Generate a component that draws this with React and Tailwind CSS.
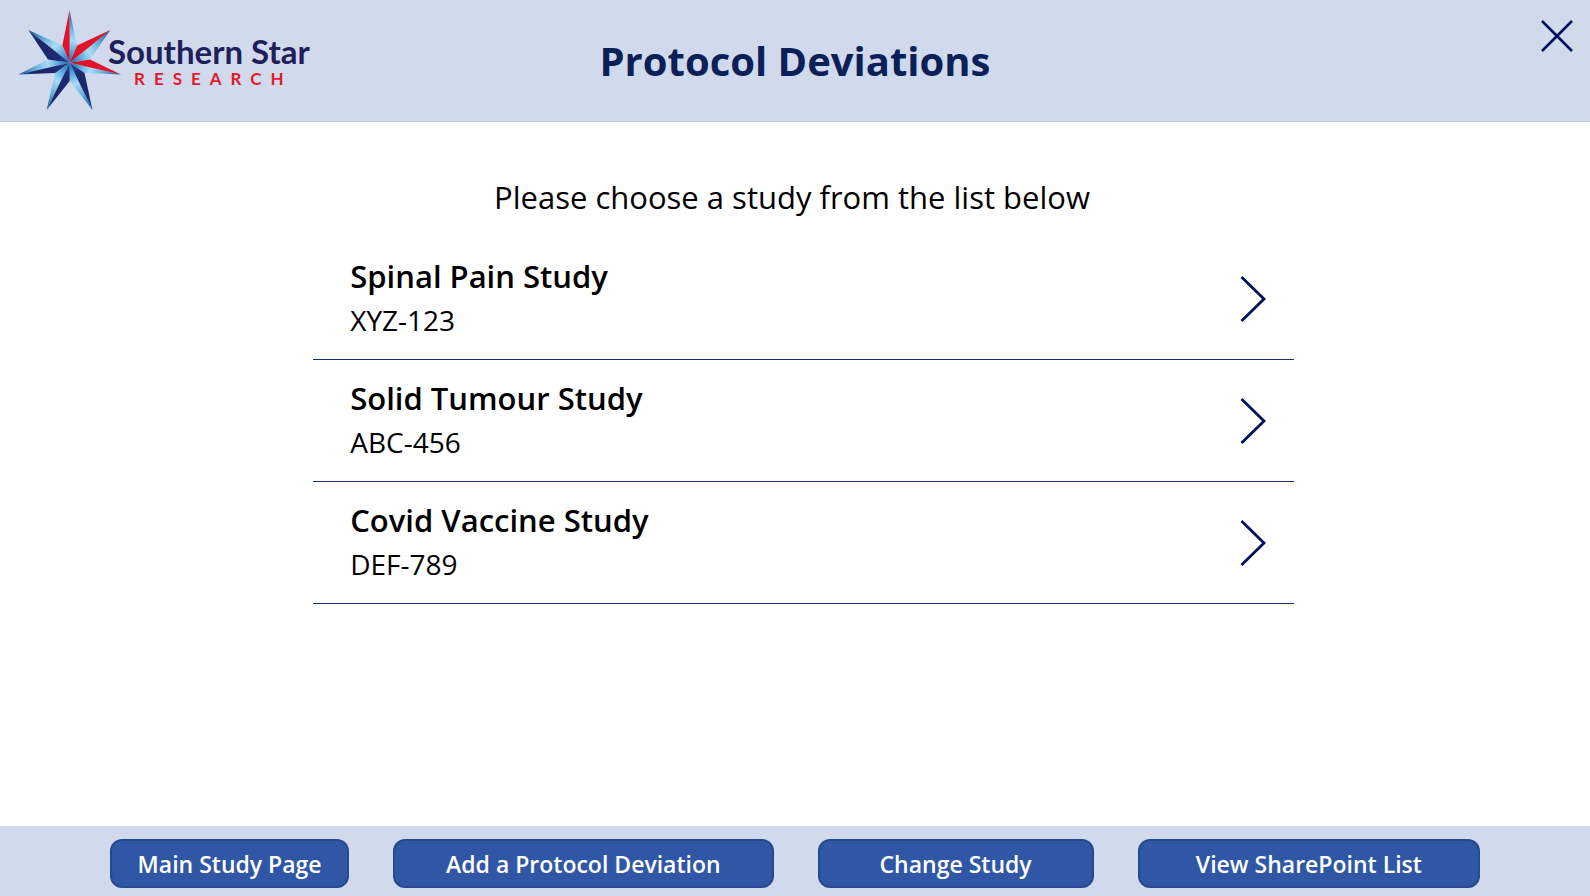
const studies = [
  { name: "Spinal Pain Study", code: "XYZ-123" },
  { name: "Solid Tumour Study", code: "ABC-456" },
  { name: "Covid Vaccine Study", code: "DEF-789" },
];

const actions = ["Main Study Page", "Add a Protocol Deviation", "Change Study", "View SharePoint List"];

const center = [51.7, 52.7];

// Each point of the star: the inner corner before it, its tip, the inner corner after it (clockwise).
const points = [
  { before: [44.3, 35.5], tip: [51.5, 0.5], after: [59, 35.5], dark: "url(#star-red)" },
  { before: [59, 35.5], tip: [92.3, 20], after: [72, 49.5], dark: "url(#star-red)" },
  { before: [72, 49.5], tip: [103, 64.5], after: [66.5, 63], dark: "url(#star-red)" },
  { before: [66.5, 63], tip: [74.5, 100], after: [51.7, 71], dark: "url(#star-navy)" },
  { before: [51.7, 71], tip: [28.7, 100], after: [37, 63], dark: "url(#star-navy)" },
  { before: [37, 63], tip: [0.5, 64.5], after: [30, 49.5], dark: "url(#star-navy)" },
  { before: [30, 49.5], tip: [10.3, 20], after: [44.3, 35.5], dark: "url(#star-navy)" },
];

const toPoints = (...list) => list.map((p) => p.join(",")).join(" ");

function Star() {
  return (
    <svg viewBox="0 0 104 101" className="h-[101px] w-[104px] shrink-0" aria-hidden="true">
      <defs>
        <radialGradient id="star-sky" gradientUnits="userSpaceOnUse" cx="51.7" cy="52.7" r="52">
          <stop offset="0" stopColor="#0d63a8" />
          <stop offset="0.2" stopColor="#4fa3dc" />
          <stop offset="0.42" stopColor="#a9dcf6" />
          <stop offset="0.65" stopColor="#6db3e0" />
          <stop offset="0.88" stopColor="#2c77b5" />
          <stop offset="1" stopColor="#173f80" />
        </radialGradient>
        <radialGradient id="star-navy" gradientUnits="userSpaceOnUse" cx="51.7" cy="52.7" r="52">
          <stop offset="0" stopColor="#1d4f96" />
          <stop offset="0.25" stopColor="#202a72" />
          <stop offset="0.7" stopColor="#1c2568" />
          <stop offset="1" stopColor="#1c4f8c" />
        </radialGradient>
        <radialGradient id="star-red" gradientUnits="userSpaceOnUse" cx="51.7" cy="52.7" r="52">
          <stop offset="0" stopColor="#a3143a" />
          <stop offset="0.2" stopColor="#e0142a" />
          <stop offset="0.8" stopColor="#e0142a" />
          <stop offset="1" stopColor="#8a2147" />
        </radialGradient>
      </defs>
      {points.map((p, i) => (
        <g key={i}>
          <polygon points={toPoints(center, p.tip, p.after)} fill="url(#star-sky)" />
          <polygon points={toPoints(center, p.before, p.tip)} fill={p.dark} />
        </g>
      ))}
    </svg>
  );
}

function Logo() {
  return (
    <div className="flex items-start text-[#1f1f5b]">
      <Star />
      <div className="-ml-[14px] pt-[22px] font-['Lato',sans-serif] font-bold">
        <div className="text-[33px] leading-[38px]">Southern Star</div>
        <div className="pl-[26px] text-[17px] leading-[17px] tracking-[9px] text-[#e8192c]">RESEARCH</div>
      </div>
    </div>
  );
}

export default function App() {
  return (
    <div className="flex min-h-screen flex-col bg-white font-['Open_Sans','Noto_Sans',sans-serif] text-black">
      <header className="grid min-h-[122px] grid-cols-[1fr_auto_1fr] items-start border-b border-[#bfc9e4] bg-[#d1d9ec]">
        <div className="pt-[10px] pl-[18px]">
          <Logo />
        </div>
        <h1 className="self-center text-[40px] leading-[56px] font-bold text-[#0b1f59]">Protocol Deviations</h1>
        <button type="button" aria-label="Close" className="mt-[16px] mr-[13px] cursor-pointer justify-self-end p-1 text-[#00125f]">
          <svg viewBox="0 0 32 32" className="size-8" fill="none" stroke="currentColor" strokeWidth="2.6" aria-hidden="true">
            <path d="M1 1L31 31M31 1L1 31" />
          </svg>
        </button>
      </header>

      <main className="flex-1 pt-[55px]">
        <p className="pr-[6px] text-center text-[31px] leading-[40px]">Please choose a study from the list below</p>
        <ul className="mt-[21px] ml-[19.7%] w-[61.7%]">
          {studies.map((study) => (
            <li key={study.code} className="border-b border-[#1c2f74]">
              <button
                type="button"
                className="flex w-full cursor-pointer items-center justify-between pt-[18px] pr-[28px] pb-[19px] pl-[37px] text-left"
              >
                <span className="flex flex-col gap-1">
                  <span className="text-[31px] leading-[40px] font-semibold">{study.name}</span>
                  <span className="text-[28px] leading-[40px]">{study.code}</span>
                </span>
                <svg viewBox="0 0 26 48" className="h-[48px] w-[26px] shrink-0" fill="none" stroke="#00125f" strokeWidth="2.8" aria-hidden="true">
                  <path d="M1.5 3L24 25L1.5 47" />
                </svg>
              </button>
            </li>
          ))}
        </ul>
      </main>

      <footer className="grid grid-cols-[239fr_380fr_276fr_342fr] gap-[44px] bg-[#d1d9ec] px-[110px] pt-[13px] pb-[8px]">
        {actions.map((action) => (
          <button
            key={action}
            type="button"
            className="h-[49px] cursor-pointer rounded-[12px] border-2 border-[#27498f] bg-[#2f57a6] text-[23px] leading-[32px] font-semibold whitespace-nowrap text-white"
          >
            {action}
          </button>
        ))}
      </footer>
    </div>
  );
}
